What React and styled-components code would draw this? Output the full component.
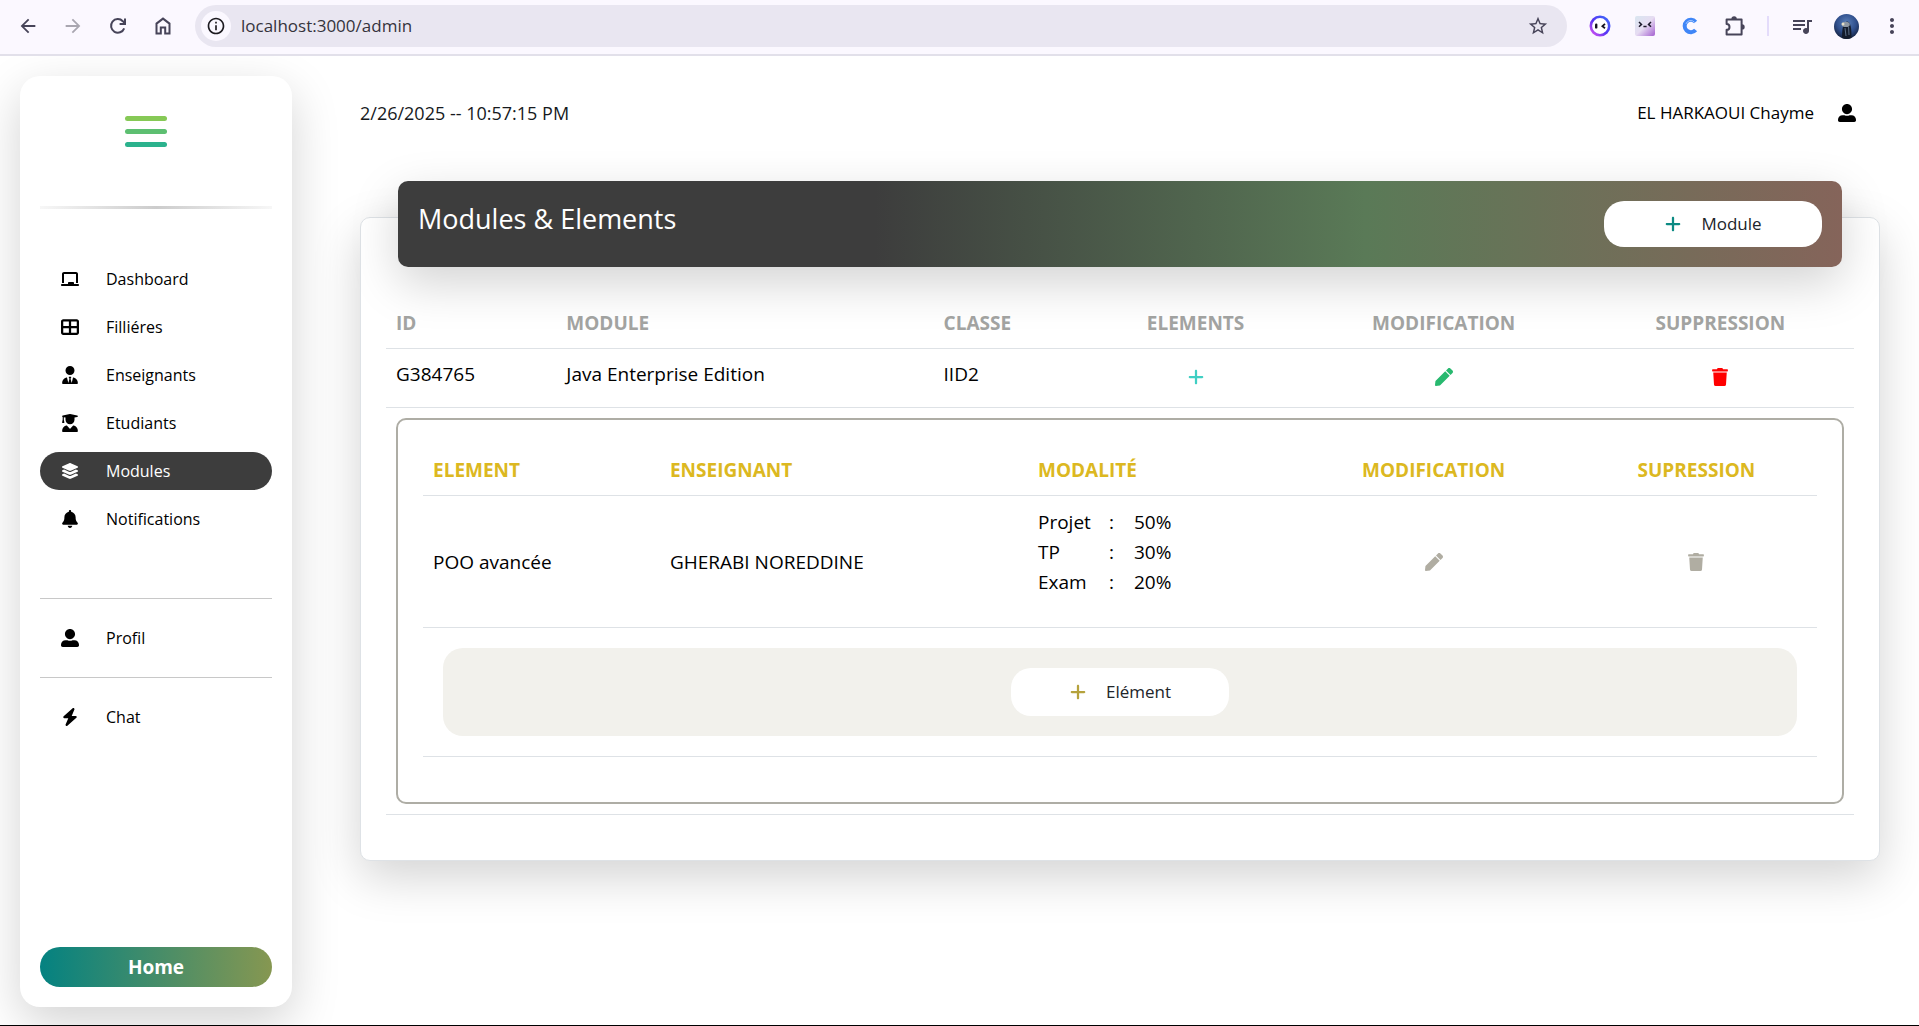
import React from "react";
import styled, { createGlobalStyle, css } from "styled-components";
import {
  FaBell,
  FaBolt,
  FaChalkboard,
  FaLayerGroup,
  FaPlus,
  FaTableCellsLarge,
  FaUserGraduate,
  FaUserTie,
} from "react-icons/fa6";
import { FaPen, FaTrash, FaUserAlt } from "react-icons/fa";
import {
  MdArrowBack,
  MdArrowForward,
  MdInfoOutline,
  MdMoreVert,
  MdQueueMusic,
  MdStarBorder,
} from "react-icons/md";

const GlobalStyle = createGlobalStyle`
  *, *::before, *::after { box-sizing: border-box; }
  body {
    margin: 0;
    background: #fff;
    color: #000;
    font-family: "Open Sans", "Noto Sans", sans-serif;
    font-size: 17px;
    line-height: 30px;
  }
  button, input { font: inherit; color: inherit; }
  button { border: 0; padding: 0; background: none; cursor: pointer; }
  a { color: inherit; text-decoration: none; }
  svg { display: block; flex: none; }
`;

const liftedShadow = css`
  box-shadow: 0 16px 48px rgba(0, 0, 0, 0.175);
`;

/* ---------- browser bar ---------- */

const Window = styled.div`
  display: flex;
  flex-direction: column;
  min-height: 100vh;
  overflow: hidden;
  border-bottom: 1px solid #000;
`;

const BrowserBar = styled.header`
  display: flex;
  align-items: center;
  gap: 22px;
  height: 56px;
  padding: 0 17px 2px;
  border-bottom: 2px solid #e2e0ea;
  background: #fbf8ff;
  color: #474459;
  position: relative;
  z-index: 1;
`;

const BarGroup = styled.div`
  display: flex;
  align-items: center;
  gap: 24px;
`;

const BarButton = styled.button`
  display: flex;
  align-items: center;
  justify-content: center;
  width: 21px;
  height: 32px;
  color: ${(p) => (p.$dim ? "#a9a6b0" : "inherit")};
`;

const AddressBox = styled.div`
  display: flex;
  align-items: center;
  flex: 1;
  gap: 10px;
  height: 42px;
  padding: 0 19px 0 6px;
  border-radius: 21px;
  background: #e9e6f1;
`;

const SiteInfo = styled.button`
  display: grid;
  place-items: center;
  width: 30px;
  height: 30px;
  border-radius: 50%;
  background: #fbf8ff;
  color: #1d1b20;
`;

const AddressInput = styled.input`
  flex: 1;
  min-width: 0;
  padding: 0;
  border: 0;
  outline: 0;
  background: transparent;
  color: #35333c;
`;

const BarSeparator = styled.span`
  width: 2px;
  height: 20px;
  margin: 0 -2px;
  background: #e4dcfb;
`;

/* ---------- page ---------- */

const Page = styled.div`
  display: flex;
  flex: 1;
  padding: 20px 39px 18px 20px;
`;

const Sidebar = styled.aside`
  display: flex;
  flex-direction: column;
  flex: none;
  width: 272px;
  padding: 40px 20px 20px;
  border-radius: 20px;
  background: #fff;
  ${liftedShadow}
`;

const MenuToggle = styled.button`
  display: flex;
  flex-direction: column;
  align-self: center;
  gap: 8px;
  width: 42px;
  margin-right: 20px;
`;

const ToggleLine = styled.span`
  height: 5px;
  border-radius: 3px;
  background: ${(p) => p.$color};
`;

const FadeRule = styled.hr`
  width: 100%;
  height: 3px;
  margin: 59px 0 51px;
  border: 0;
  background: linear-gradient(to right, #f7f7f7, #cccccc 50%, #f7f7f7);
`;

const Rule = styled.hr`
  width: 100%;
  height: 1px;
  margin: 20px 0;
  border: 0;
  background: #c8c8c8;
`;

const NavList = styled.ul`
  display: flex;
  flex-direction: column;
  gap: 10px;
  margin: 0;
  padding: 0 0 ${(p) => (p.$roomy ? 40 : 0)}px;
  list-style: none;
`;

const NavLink = styled.a`
  display: flex;
  align-items: center;
  height: 38px;
  padding: 0 21px;
  border-radius: 20px;
  background: ${(p) => (p.$active ? "#3d3d3d" : "transparent")};
  color: ${(p) => (p.$active ? "#fff" : "#000")};
  font-size: 16px;
`;

const NavIcon = styled.span`
  width: 45px;
  font-size: 18px;
`;

const HomeLink = styled.a`
  margin-top: auto;
  border-radius: 20px;
  background: linear-gradient(to right, #048281, #869751);
  color: #fff;
  font-size: 19px;
  font-weight: 700;
  line-height: 40px;
  text-align: center;
`;

const Main = styled.main`
  flex: 1;
  min-width: 0;
  padding: 22px 0 0 68px;
`;

const TopLine = styled.div`
  display: flex;
  align-items: center;
  justify-content: space-between;
  padding-right: 24px;
  color: #16191d;
`;

const Clock = styled.time`
  font-size: 18px;
`;

const UserInfo = styled.div`
  display: flex;
  align-items: center;
  gap: 24px;
  color: #000;
`;

const Card = styled.section`
  margin-top: 89px;
  padding: 0 25px 45px;
  border: 1px solid #dee2e6;
  border-radius: 10px;
  background: #fff;
  ${liftedShadow}
`;

const CardHeader = styled.div`
  display: flex;
  align-items: center;
  justify-content: space-between;
  margin: -37px 12px 31px;
  padding: 20px;
  border-radius: 10px;
  background: linear-gradient(to right, #3d3d3d 33%, #5a7a57 67%, #85645a);
  position: relative;
  ${liftedShadow}
`;

const Title = styled.h1`
  align-self: flex-start;
  margin: 0;
  color: #fff;
  font-size: 27px;
  font-weight: 400;
  line-height: 36px;
`;

const AddButton = styled.button`
  display: flex;
  align-items: center;
  justify-content: center;
  gap: 19px;
  width: 218px;
  height: ${(p) => p.$height}px;
  border-radius: 20px;
  background: #fff;
  color: #212529;
  font-size: 17px;

  svg {
    color: ${(p) => p.$accent};
    font-size: 18px;
  }
`;

/* ---------- tables ---------- */

const Table = styled.table`
  width: 100%;
  border-collapse: collapse;
  table-layout: fixed;
  font-size: 19px;
`;

const HeadCell = styled.th`
  width: ${(p) => p.$width};
  padding: 10px;
  border-bottom: 1px solid #dee2e6;
  color: ${(p) => p.$color};
  font-weight: 700;
  text-align: ${(p) => (p.$center ? "center" : "left")};
`;

const Cell = styled.td`
  height: 59px;
  padding: ${(p) => (p.$tall ? "11px 10px 30px" : "10px")};
  border-bottom: 1px solid #dee2e6;
  vertical-align: ${(p) => (p.$middle ? "middle" : "top")};
`;

const IconButton = styled.button`
  display: block;
  margin: ${(p) => (p.$raised ? 0 : 9)}px auto 0;
  color: ${(p) => p.$color};
  font-size: 18px;
`;

const Panel = styled.div`
  padding: 25px 25px 45px;
  border: 2px solid #aeada5;
  border-radius: 10px;
`;

const AddStrip = styled.div`
  display: flex;
  justify-content: center;
  margin: 10px;
  padding: 20px;
  border-radius: 20px;
  background: #f2f1ec;
`;

const Weights = styled.dl`
  display: grid;
  grid-template-columns: 71px 1fr;
  margin: 0;

  dt, dd { margin: 0; }
`;

const Share = styled.dd`
  display: flex;

  &::before {
    content: ":";
    width: 25px;
  }
`;

/* ---------- drawings ---------- */

const ReloadIcon = () => (
  <svg width="20" height="20" viewBox="0 0 20 20" fill="none" stroke="currentColor" strokeWidth="2">
    <path d="M16.2 12.3A6.8 6.8 0 1 1 14.8 5.2L16.6 7.2" />
    <path d="M17 2.6V8H11.6" />
  </svg>
);

const HouseIcon = () => (
  <svg width="20" height="20" viewBox="0 0 20 20" fill="none" stroke="currentColor" strokeWidth="2">
    <path d="M3.5 17.5V7.6L10 2.6L16.5 7.6V17.5H12.2V11.4H7.8V17.5Z" />
  </svg>
);

const FaceRingIcon = () => (
  <svg width="22" height="22" viewBox="0 0 22 22">
    <defs>
      <linearGradient id="ring" x1="0" y1="1" x2="1" y2="0">
        <stop offset="0" stopColor="#e056f0" />
        <stop offset="0.45" stopColor="#5a34f5" />
        <stop offset="1" stopColor="#3a6cf8" />
      </linearGradient>
    </defs>
    <circle cx="11" cy="11" r="9.2" fill="#fff" stroke="url(#ring)" strokeWidth="2.6" />
    <rect x="6" y="8.6" width="2.4" height="5" rx="1.2" fill="#14121f" />
    <path d="M16 8.8L13.4 11.2L16 13.2" fill="none" stroke="#14121f" strokeWidth="1.8" />
  </svg>
);

const FaceTileIcon = () => (
  <svg width="20" height="20" viewBox="0 0 20 20">
    <defs>
      <linearGradient id="tile" x1="0" y1="0" x2="1" y2="1">
        <stop offset="0" stopColor="#d9e6f0" />
        <stop offset="0.5" stopColor="#e6dcf2" />
        <stop offset="1" stopColor="#a45fd0" />
      </linearGradient>
    </defs>
    <rect width="20" height="20" rx="2" fill="url(#tile)" />
    <path d="M4 6L6.5 8.4L4 10.8M16 6L13.5 8.4L16 10.8M8.4 10.4H11.6" fill="none" stroke="#1c1a2b" strokeWidth="1.5" />
  </svg>
);

const ArcIcon = () => (
  <svg width="18" height="18" viewBox="0 0 18 18" fill="none" stroke="#3f86f7">
    <path d="M14.6 5A6.2 6.2 0 1 0 14.6 13" strokeWidth="4" />
    <path d="M13.6 5.4A5 5 0 0 0 5 6.8" stroke="#a9cbff" strokeWidth="1" />
  </svg>
);

const PuzzleIcon = () => (
  <svg width="22" height="22" viewBox="0 0 22 22">
    <path
      d="M2.6 4.4H17.6V19.4H2.6V14.8A2.9 2.9 0 0 0 2.6 9Z"
      fill="none"
      stroke="currentColor"
      strokeWidth="2"
      strokeLinejoin="round"
    />
    <path d="M7.4 4A2.7 2.7 0 0 1 12.8 4ZM18 9.2A2.7 2.7 0 0 1 18 14.6Z" fill="currentColor" />
  </svg>
);

const AvatarIcon = () => (
  <svg width="25" height="25" viewBox="0 0 25 25">
    <defs>
      <radialGradient id="avatar" cx="0.5" cy="0.35" r="0.7">
        <stop offset="0" stopColor="#5a7fb8" />
        <stop offset="0.55" stopColor="#2f4f8d" />
        <stop offset="1" stopColor="#101a33" />
      </radialGradient>
    </defs>
    <circle cx="12.5" cy="12.5" r="12.5" fill="url(#avatar)" />
    <path d="M8 24C8 18 8.4 8 12.8 7.4C17.4 7.6 17.6 17 17.4 24A12.5 12.5 0 0 1 8 24Z" fill="#141c2c" />
    <ellipse cx="11.8" cy="10.4" rx="4" ry="2.6" fill="#8f98a3" />
    <circle cx="9" cy="10" r="1.5" fill="#e6dfc8" />
    <path d="M11 14L12 22M14.6 13L15 21" stroke="#5c6f88" strokeWidth="1" />
  </svg>
);

/* ---------- data ---------- */

const mainLinks = [
  { label: "Dashboard", Icon: FaChalkboard },
  { label: "Filliéres", Icon: FaTableCellsLarge },
  { label: "Enseignants", Icon: FaUserTie },
  { label: "Etudiants", Icon: FaUserGraduate },
  { label: "Modules", Icon: FaLayerGroup, active: true },
  { label: "Notifications", Icon: FaBell },
];

const moduleColumns = [
  { label: "ID", width: "11.6%" },
  { label: "MODULE", width: "25.7%" },
  { label: "CLASSE", width: "10.7%" },
  { label: "ELEMENTS", width: "14.3%", center: true },
  { label: "MODIFICATION", width: "19.5%", center: true },
  { label: "SUPPRESSION", width: "18.2%", center: true },
];

const elementColumns = [
  { label: "ELEMENT", width: "17%" },
  { label: "ENSEIGNANT", width: "26.4%" },
  { label: "MODALITÉ", width: "18.9%" },
  { label: "MODIFICATION", width: "20.4%", center: true },
  { label: "SUPRESSION", width: "17.3%", center: true },
];

const weights = [
  { name: "Projet", share: "50%" },
  { name: "TP", share: "30%" },
  { name: "Exam", share: "20%" },
];

function NavItem({ label, Icon, active }) {
  return (
    <li>
      <NavLink href={`#${label}`} $active={active} aria-current={active ? "page" : undefined}>
        <NavIcon>
          <Icon />
        </NavIcon>
        {label}
      </NavLink>
    </li>
  );
}

function HeadRow({ columns, color }) {
  return (
    <thead>
      <tr>
        {columns.map((c) => (
          <HeadCell key={c.label} scope="col" $width={c.width} $center={c.center} $color={color}>
            {c.label}
          </HeadCell>
        ))}
      </tr>
    </thead>
  );
}

function ElementsTable() {
  return (
    <Table>
      <HeadRow columns={elementColumns} color="#dcb821" />
      <tbody>
        <tr>
          <Cell $middle>POO avancée</Cell>
          <Cell $middle>GHERABI NOREDDINE</Cell>
          <Cell $tall>
            <Weights>
              {weights.map((w) => (
                <React.Fragment key={w.name}>
                  <dt>{w.name}</dt>
                  <Share>{w.share}</Share>
                </React.Fragment>
              ))}
            </Weights>
          </Cell>
          <Cell $middle>
            <IconButton $raised $color="#b0ada2" aria-label="Modifier l'élément">
              <FaPen />
            </IconButton>
          </Cell>
          <Cell $middle>
            <IconButton $raised $color="#b0ada2" aria-label="Supprimer l'élément">
              <FaTrash />
            </IconButton>
          </Cell>
        </tr>
        <tr>
          <Cell colSpan={5}>
            <AddStrip>
              <AddButton $height={48} $accent="#b5a23c">
                <FaPlus />
                Elément
              </AddButton>
            </AddStrip>
          </Cell>
        </tr>
      </tbody>
    </Table>
  );
}

export default function App() {
  return (
    <>
      <GlobalStyle />
      <Window>
        <BrowserBar>
          <BarGroup>
            <BarButton aria-label="Back"><MdArrowBack size={22} /></BarButton>
            <BarButton aria-label="Forward" $dim><MdArrowForward size={22} /></BarButton>
            <BarButton aria-label="Reload"><ReloadIcon /></BarButton>
            <BarButton aria-label="Home page"><HouseIcon /></BarButton>
          </BarGroup>
          <AddressBox>
            <SiteInfo aria-label="Site information"><MdInfoOutline size={20} /></SiteInfo>
            <AddressInput aria-label="Address" defaultValue="localhost:3000/admin" />
            <BarButton aria-label="Bookmark"><MdStarBorder size={22} /></BarButton>
          </AddressBox>
          <BarGroup>
            <BarButton aria-label="Assistant"><FaceRingIcon /></BarButton>
            <BarButton aria-label="Companion"><FaceTileIcon /></BarButton>
            <BarButton aria-label="Capture"><ArcIcon /></BarButton>
            <BarButton aria-label="Extensions"><PuzzleIcon /></BarButton>
            <BarSeparator />
            <BarButton aria-label="Media"><MdQueueMusic size={24} /></BarButton>
            <BarButton aria-label="Profile"><AvatarIcon /></BarButton>
            <BarButton aria-label="More"><MdMoreVert size={24} /></BarButton>
          </BarGroup>
        </BrowserBar>

        <Page>
          <Sidebar>
            <MenuToggle aria-label="Menu">
              <ToggleLine $color="#86c956" />
              <ToggleLine $color="#5dbf71" />
              <ToggleLine $color="#2bb28d" />
            </MenuToggle>
            <FadeRule />
            <nav>
              <NavList $roomy>
                {mainLinks.map((l) => (
                  <NavItem key={l.label} {...l} />
                ))}
              </NavList>
              <Rule />
              <NavList>
                <NavItem label="Profil" Icon={FaUserAlt} />
              </NavList>
              <Rule />
              <NavList>
                <NavItem label="Chat" Icon={FaBolt} />
              </NavList>
            </nav>
            <HomeLink href="#home">Home</HomeLink>
          </Sidebar>

          <Main>
            <TopLine>
              <Clock>2/26/2025 -- 10:57:15 PM</Clock>
              <UserInfo>
                EL HARKAOUI Chayme
                <FaUserAlt size={18} />
              </UserInfo>
            </TopLine>

            <Card>
              <CardHeader>
                <Title>Modules &amp; Elements</Title>
                <AddButton $height={46} $accent="#0b8a83">
                  <FaPlus />
                  Module
                </AddButton>
              </CardHeader>
              <Table>
                <HeadRow columns={moduleColumns} color="#a3a4a2" />
                <tbody>
                  <tr>
                    <Cell>G384765</Cell>
                    <Cell>Java Enterprise Edition</Cell>
                    <Cell>IID2</Cell>
                    <Cell>
                      <IconButton $color="#3fcfc3" aria-label="Ajouter un élément">
                        <FaPlus />
                      </IconButton>
                    </Cell>
                    <Cell>
                      <IconButton $color="#28b96f" aria-label="Modifier le module">
                        <FaPen />
                      </IconButton>
                    </Cell>
                    <Cell>
                      <IconButton $color="#ff0000" aria-label="Supprimer le module">
                        <FaTrash />
                      </IconButton>
                    </Cell>
                  </tr>
                  <tr>
                    <Cell colSpan={6}>
                      <Panel>
                        <ElementsTable />
                      </Panel>
                    </Cell>
                  </tr>
                </tbody>
              </Table>
            </Card>
          </Main>
        </Page>
      </Window>
    </>
  );
}
